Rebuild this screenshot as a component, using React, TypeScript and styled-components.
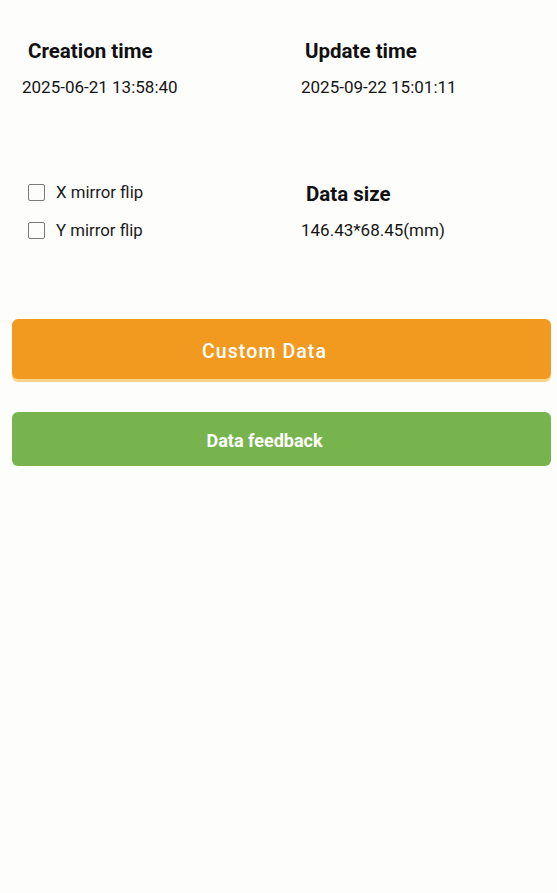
import { createGlobalStyle } from "styled-components";
import styled from "styled-components";

const GlobalStyle = createGlobalStyle`
  html, body {
    margin: 0;
    padding: 0;
    background: #fdfdfc;
    font-family: Roboto, "Noto Sans", "Liberation Sans", sans-serif;
    color: #111;
  }
`;

const Page = styled.div`
  width: 557px;
  min-height: 893px;
  box-sizing: border-box;
  padding-top: 38px;
`;

const InfoGrid = styled.div`
  display: grid;
  grid-template-columns: 279px 1fr;
  padding-left: 22px;
  row-gap: 83px;
`;

const Field = styled.div`
  display: flex;
  flex-direction: column;
`;

const Label = styled.div<{ $gap?: number }>`
  font-size: 20.5px;
  font-weight: 700;
  line-height: 26px;
  padding-left: ${({ $gap }) => $gap ?? 6}px;
  margin-bottom: 12px;
`;

const Value = styled.div`
  font-size: 17px;
  line-height: 22px;
  color: #151515;
`;

const Options = styled.div`
  display: flex;
  flex-direction: column;
  gap: 16px;
  padding-left: 6px;
`;

const Option = styled.label`
  display: flex;
  align-items: center;
  gap: 11px;
  font-size: 16.8px;
  line-height: 22px;
  color: #1a1a1a;
`;

const Box = styled.span`
  width: 17px;
  height: 17px;
  border: 1.5px solid #7a7a7a;
  border-radius: 2px;
  box-sizing: border-box;
  flex-shrink: 0;
`;

const Buttons = styled.div`
  display: flex;
  flex-direction: column;
  gap: 33px;
  padding: 0 6px 0 12px;
  margin-top: 78px;
`;

const ActionButton = styled.button<{ $bg: string; $h: number; $edge?: string; $spacing?: number }>`
  height: ${({ $h }) => $h}px;
  border: none;
  border-radius: 6px;
  background: ${({ $bg }) => $bg};
  box-shadow: ${({ $edge }) => ($edge ? `0 3px 0 ${$edge}` : "none")};
  color: #fff;
  font-family: Roboto, "Noto Sans", "Liberation Sans", sans-serif;
  font-size: 19.5px;
  font-weight: 500;
  letter-spacing: ${({ $spacing }) => $spacing ?? 0}px;
  padding: 4px 34px 0 0;
  cursor: pointer;
`;

const FeedbackButton = styled(ActionButton)`
  font-size: 18px;
  font-weight: 700;
  padding-top: 2px;
`;

export default function App() {
  return (
    <>
      <GlobalStyle />
      <Page>
        <InfoGrid>
          <Field>
            <Label>Creation time</Label>
            <Value>2025-06-21 13:58:40</Value>
          </Field>
          <Field>
            <Label $gap={4}>Update time</Label>
            <Value>2025-09-22 15:01:11</Value>
          </Field>
          <Options>
            <Option>
              <Box />
              X mirror flip
            </Option>
            <Option>
              <Box />
              Y mirror flip
            </Option>
          </Options>
          <Field>
            <Label $gap={5}>Data size</Label>
            <Value>146.43*68.45(mm)</Value>
          </Field>
        </InfoGrid>
        <Buttons>
          <ActionButton $bg="#f29a1f" $h={60} $edge="#fcd58a" $spacing={1.1}>
            Custom Data
          </ActionButton>
          <FeedbackButton $bg="#77b44e" $h={54}>
            Data feedback
          </FeedbackButton>
        </Buttons>
      </Page>
    </>
  );
}
